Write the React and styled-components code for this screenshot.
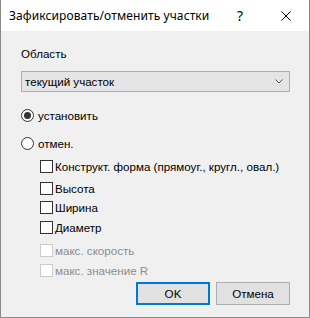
import styled, { createGlobalStyle } from "styled-components";

const GlobalStyle = createGlobalStyle`
  html, body {
    margin: 0;
    padding: 0;
    background: #f0f0f0;
  }
  * {
    box-sizing: border-box;
  }
`;

const Window = styled.div`
  width: 310px;
  height: 318px;
  display: flex;
  flex-direction: column;
  background: #f0f0f0;
  border: 1px solid #8a8a8a;
  border-top: none;
  font-family: "Liberation Sans", Arial, sans-serif;
  font-size: 11.6px;
  color: #000;
  overflow: hidden;
`;

const TitleBar = styled.div`
  height: 31px;
  flex: none;
  display: flex;
  align-items: center;
  background: #fff;
  padding-left: 8px;
`;

const Title = styled.div`
  flex: 1;
  font-family: "Noto Sans", "Segoe UI", sans-serif;
  font-size: 12px;
  letter-spacing: 0.1px;
  color: #000;
`;

const TitleButton = styled.div`
  width: ${(p) => p.$w}px;
  height: 31px;
  display: flex;
  align-items: center;
  justify-content: center;
  font-family: "Noto Sans", sans-serif;
  font-size: 14px;
  color: #000;
`;

const Body = styled.div`
  flex: 1;
  display: flex;
  flex-direction: column;
  padding: 0 19px 0 20px;
`;

const Label = styled.div`
  margin-top: ${(p) => p.$top}px;
  line-height: 13px;
  height: 13px;
  color: ${(p) => (p.$disabled ? "#8d8d8d" : "#000")};
  white-space: nowrap;
`;

const Combo = styled.div`
  margin-top: 11px;
  height: 21px;
  display: flex;
  align-items: center;
  justify-content: space-between;
  background: #e5e5e5;
  border: 1px solid #adadad;
  padding: 0 6px 0 3px;
`;

const OptionRow = styled.div`
  margin-top: ${(p) => p.$top}px;
  margin-left: ${(p) => p.$indent || 0}px;
  height: 13px;
  display: flex;
  align-items: center;
  gap: ${(p) => p.$gap}px;
`;

const RadioCircle = styled.span`
  width: 13px;
  height: 13px;
  flex: none;
  border-radius: 50%;
  border: 1px solid #333;
  background: #fff;
  display: flex;
  align-items: center;
  justify-content: center;
  &::after {
    content: "";
    width: 7px;
    height: 7px;
    border-radius: 50%;
    background: ${(p) => (p.$checked ? "#333" : "transparent")};
  }
`;

const CheckBox = styled.span`
  width: 13px;
  height: 13px;
  flex: none;
  border: 1px solid ${(p) => (p.$disabled ? "#cccccc" : "#333")};
  background: #fff;
`;

const ButtonBar = styled.div`
  margin-top: 5px;
  display: flex;
  justify-content: flex-end;
  gap: 6px;
`;

const Button = styled.div`
  width: 74px;
  height: 23px;
  display: flex;
  align-items: center;
  justify-content: center;
  background: #e1e1e1;
  border: ${(p) => (p.$default ? "2px solid #0078d7" : "1px solid #adadad")};
`;

const checks = [
  { text: "Конструкт. форма (прямоуг., кругл., овал.)", top: 10 },
  { text: "Высота", top: 9 },
  { text: "Ширина", top: 6 },
  { text: "Диаметр", top: 7 },
  { text: "макс. скорость", top: 10, disabled: true },
  { text: "макс. значение R", top: 7, disabled: true },
];

export default function App() {
  return (
    <>
      <GlobalStyle />
      <Window>
        <TitleBar>
          <Title>Зафиксировать/отменить участки</Title>
          <TitleButton $w={46}>?</TitleButton>
          <TitleButton $w={46}>
            <svg width="10" height="10" viewBox="0 0 10 10">
              <path d="M0.5 0.5 L9.5 9.5 M9.5 0.5 L0.5 9.5" stroke="#000" strokeWidth="1" />
            </svg>
          </TitleButton>
        </TitleBar>
        <Body>
          <Label $top={16}>Область</Label>
          <Combo>
            <span>текущий участок</span>
            <svg width="8" height="5" viewBox="0 0 8 5">
              <path d="M0.5 0.5 L4 4 L7.5 0.5" stroke="#555" strokeWidth="1" fill="none" />
            </svg>
          </Combo>
          <OptionRow $top={17} $gap={4}>
            <RadioCircle $checked />
            <span>установить</span>
          </OptionRow>
          <OptionRow $top={15} $gap={4}>
            <RadioCircle />
            <span>отмен.</span>
          </OptionRow>
          {checks.map((c) => (
            <OptionRow key={c.text} $top={c.top} $indent={19} $gap={2}>
              <CheckBox $disabled={c.disabled} />
              <Label $top={0} $disabled={c.disabled}>
                {c.text}
              </Label>
            </OptionRow>
          ))}
          <ButtonBar>
            <Button $default>OK</Button>
            <Button>Отмена</Button>
          </ButtonBar>
        </Body>
      </Window>
    </>
  );
}
